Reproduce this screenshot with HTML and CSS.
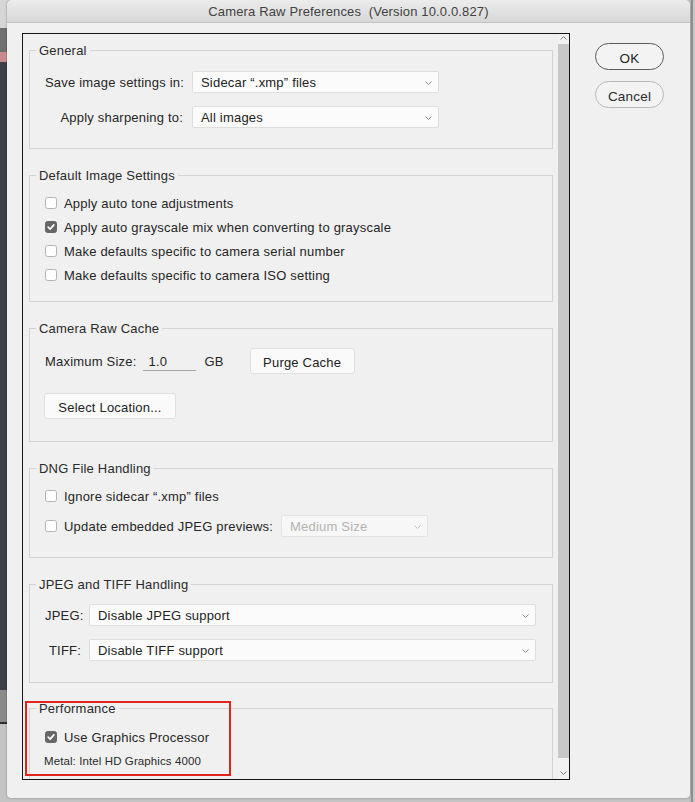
FILE: index.html
```html
<!DOCTYPE html>
<html>
<head>
<meta charset="utf-8">
<title>Camera Raw Preferences</title>
<link rel="stylesheet" href="styles.css">
</head>
<body>
<div class="desktop">
  <div class="dialog">
    <div class="titlebar">Camera Raw Preferences&nbsp;&nbsp;(Version 10.0.0.827)</div>
    <div class="dialog-body">
      <div class="panel">
        <div class="panel-content">

          <section class="group group-first">
            <div class="legend">General</div>
            <div class="form-grid general-grid">
              <label class="field-label">Save image settings in:</label>
              <div class="select">Sidecar “.xmp” files<svg class="chev" viewBox="0 0 7 4"><polyline points="0.5,0.5 3.5,3.5 6.5,0.5"/></svg></div>
              <label class="field-label">Apply sharpening to:</label>
              <div class="select">All images<svg class="chev" viewBox="0 0 7 4"><polyline points="0.5,0.5 3.5,3.5 6.5,0.5"/></svg></div>
            </div>
          </section>

          <section class="group">
            <div class="legend">Default Image Settings</div>
            <div class="checks">
              <div class="check-row"><span class="checkbox"></span>Apply auto tone adjustments</div>
              <div class="check-row"><span class="checkbox checked"><svg viewBox="0 0 12 12"><polyline points="2.6,6.2 5,8.5 9.4,3.4"/></svg></span>Apply auto grayscale mix when converting to grayscale</div>
              <div class="check-row"><span class="checkbox"></span>Make defaults specific to camera serial number</div>
              <div class="check-row"><span class="checkbox"></span>Make defaults specific to camera ISO setting</div>
            </div>
          </section>

          <section class="group">
            <div class="legend">Camera Raw Cache</div>
            <div class="cache">
              <div class="cache-row">
                <span class="cache-label">Maximum Size:</span>
                <span class="text-input">1.0</span>
                <span class="unit">GB</span>
                <button class="btn btn-purge">Purge Cache</button>
              </div>
              <div class="cache-row cache-row-2">
                <button class="btn btn-location">Select Location...</button>
              </div>
            </div>
          </section>

          <section class="group">
            <div class="legend">DNG File Handling</div>
            <div class="dng">
              <div class="check-row"><span class="checkbox"></span>Ignore sidecar “.xmp” files</div>
              <div class="check-row dng-row-2"><span class="checkbox"></span>Update embedded JPEG previews:<div class="select select-disabled">Medium Size<svg class="chev" viewBox="0 0 7 4"><polyline points="0.5,0.5 3.5,3.5 6.5,0.5"/></svg></div></div>
            </div>
          </section>

          <section class="group">
            <div class="legend">JPEG and TIFF Handling</div>
            <div class="form-grid jpeg-grid">
              <label class="field-label">JPEG:</label>
              <div class="select">Disable JPEG support<svg class="chev" viewBox="0 0 7 4"><polyline points="0.5,0.5 3.5,3.5 6.5,0.5"/></svg></div>
              <label class="field-label">TIFF:</label>
              <div class="select">Disable TIFF support<svg class="chev" viewBox="0 0 7 4"><polyline points="0.5,0.5 3.5,3.5 6.5,0.5"/></svg></div>
            </div>
          </section>

          <section class="group group-last">
            <div class="legend">Performance</div>
            <div class="perf">
              <div class="check-row"><span class="checkbox checked"><svg viewBox="0 0 12 12"><polyline points="2.6,6.2 5,8.5 9.4,3.4"/></svg></span>Use Graphics Processor</div>
              <div class="gpu-info">Metal: Intel HD Graphics 4000</div>
            </div>
          </section>

        </div>
        <div class="scrollbar">
          <div class="sb-up"><svg viewBox="0 0 7 4"><polyline points="0.5,3.5 3.5,0.5 6.5,3.5"/></svg></div>
          <div class="sb-thumb"></div>
          <div class="sb-down"><svg viewBox="0 0 7 4"><polyline points="0.5,0.5 3.5,3.5 6.5,0.5"/></svg></div>
        </div>
        <div class="highlight"></div>
      </div>
      <div class="actions">
        <button class="pill pill-default">OK</button>
        <button class="pill">Cancel</button>
      </div>
    </div>
  </div>
</div>
</body>
</html>
```
FILE: styles.css
```css
* { box-sizing: border-box; }

html, body {
  margin: 0;
  padding: 0;
}

body {
  width: 695px;
  height: 802px;
  overflow: hidden;
  font-family: "Liberation Sans", Arial, Helvetica, sans-serif;
  font-size: 13px;
  letter-spacing: 0.2px;
  color: #262626;
}

.desktop {
  width: 695px;
  height: 802px;
  overflow: hidden;
  padding-left: 7px;
  background:
    linear-gradient(to right, transparent 0 689px, #bdbdbd 689px 691px, #8f8f8f 691px 693px, #c6c6c6 693px),
    linear-gradient(to bottom, #d6d6d6 0 28px, #707070 28px 52px, #c98b8d 52px 62px, #3c3f48 62px 690px, #8a8a8a 690px 722px, #2f2f2f 722px 724px, #c4c4c4 724px);
}

.dialog {
  width: 683px;
  height: 798px;
  background: #f0f0f0;
  border-radius: 5px 5px 4px 4px;
  box-shadow: 0 0 2px rgba(0, 0, 0, 0.45);
  overflow: hidden;
}

.titlebar {
  height: 23px;
  line-height: 22px;
  padding-top: 1px;
  text-align: center;
  font-size: 13px;
  letter-spacing: 0.15px;
  color: #424242;
  background: linear-gradient(to bottom, #ececec, #d7d7d7);
  border-bottom: 1px solid #c2c2c2;
}

.dialog-body {
  display: flex;
  align-items: flex-start;
  padding: 10px 0 0 15px;
}

.panel {
  position: relative;
  width: 548px;
  height: 747px;
  border: 1px solid #151515;
  display: flex;
  overflow: hidden;
  background: #f0f0f0;
}

.panel-content {
  width: 535px;
  flex: none;
}

/* group boxes */
.group {
  margin: 26px 5px 0 6px;
  border: 1px solid #d3d3d3;
}
.group-first { margin-top: 16px; }
.group-last { margin-top: 25px; }

.legend {
  display: table;
  margin: -9px 0 -2px 6px;
  padding: 0 3px;
  line-height: 18px;
  background: #f0f0f0;
  color: #2a2a2a;
}

.form-grid {
  display: grid;
  column-gap: 9px;
  row-gap: 13px;
}
.general-grid {
  grid-template-columns: 138px 247px;
  padding: 13px 0 20px 15px;
}
.jpeg-grid {
  grid-template-columns: 36px 447px;
  column-gap: 8px;
  padding: 12px 0 21px 15px;
}
.field-label {
  text-align: right;
  white-space: nowrap;
  height: 22px;
  line-height: 24px;
}

.select {
  position: relative;
  height: 22px;
  line-height: 20px;
  padding-top: 1px;
  border: 1px solid #dedede;
  border-radius: 2px;
  background: #fbfbfb;
  padding-left: 8px;
  white-space: nowrap;
  color: #222;
}
.chev {
  position: absolute;
  right: 6px;
  top: 9px;
  width: 7px;
  height: 4px;
  fill: none;
  stroke: #8a8a8a;
  stroke-width: 1;
}
.select-disabled {
  width: 147px;
  margin-left: 8px;
  color: #b3b3b3;
  border-color: #e4e4e4;
  background: #f7f7f7;
}
.select-disabled .chev { stroke: #c4c4c4; }

/* checkboxes */
.checks { padding: 8px 0 14px 15px; }
.check-row {
  display: flex;
  align-items: center;
  height: 24px;
  white-space: nowrap;
}
.checkbox {
  flex: none;
  width: 12px;
  height: 12px;
  margin-right: 7px;
  border: 1px solid #b4b4b4;
  border-radius: 2.5px;
  background: #ffffff;
}
.checkbox.checked {
  background: #666666;
  border-color: #666666;
  display: flex;
}
.checkbox svg {
  width: 10px;
  height: 10px;
  fill: none;
  stroke: #ffffff;
  stroke-width: 2;
  stroke-linecap: round;
  stroke-linejoin: round;
}

/* cache */
.cache { padding: 12px 0 22px 15px; }
.cache-row {
  display: flex;
  align-items: center;
  height: 26px;
  white-space: nowrap;
}
.cache-row-2 { margin-top: 19px; }
.cache-label,
.unit {
  line-height: 28px;
  height: 26px;
}
.text-input {
  width: 53px;
  height: 20px;
  line-height: 22px;
  margin-left: 7px;
  padding-left: 5px;
  border-bottom: 1px solid #a6a6a6;
}
.unit { margin-left: 8px; }
.btn {
  height: 26px;
  font-family: inherit;
  font-size: 13px;
  letter-spacing: 0.2px;
  color: #222;
  background: #fafafa;
  border: 1px solid #dfdfdf;
  border-radius: 3px;
  padding: 2px 0 0;
}
.btn-purge {
  width: 105px;
  margin-left: 26px;
}
.btn-location {
  width: 132px;
  margin-left: -1px;
}

/* dng */
.dng { padding: 8px 0 20px 15px; }
.dng-row-2 {
  margin-top: 7px;
  height: 22px;
}

/* performance */
.perf { padding: 9px 0 14px 15px; }
.gpu-info {
  margin: 4px 0 0 -1px;
  line-height: 16px;
  font-size: 11.5px;
  letter-spacing: 0.1px;
  color: #2a2a2a;
}

/* scrollbar */
.scrollbar {
  width: 11px;
  flex: none;
  display: flex;
  flex-direction: column;
  background: #f2f2f2;
}
.sb-up {
  height: 10px;
  display: flex;
  justify-content: center;
  padding-top: 2px;
}
.sb-thumb {
  flex: 1;
  background: #c8c8c8;
}
.sb-down {
  height: 21px;
  display: flex;
  justify-content: center;
  align-items: flex-end;
  padding-bottom: 4px;
}
.scrollbar svg {
  width: 7px;
  height: 4px;
  fill: none;
  stroke: #808080;
  stroke-width: 1;
}

/* annotation */
.highlight {
  position: absolute;
  left: 2px;
  top: 667px;
  width: 206px;
  height: 75px;
  border: 2px solid #e0241c;
  pointer-events: none;
}

/* action buttons */
.actions {
  display: flex;
  flex-direction: column;
  gap: 11px;
  margin: 10px 0 0 25px;
}
.pill {
  width: 69px;
  height: 27px;
  border-radius: 14px;
  border: 1px solid #b9b9b9;
  background: #f3f3f3;
  font-family: inherit;
  font-size: 13.5px;
  letter-spacing: 0.2px;
  color: #2b2b2b;
  padding: 3px 0 0;
}
.pill-default {
  border-color: #5a5a5a;
  color: #1e1e1e;
}
```
